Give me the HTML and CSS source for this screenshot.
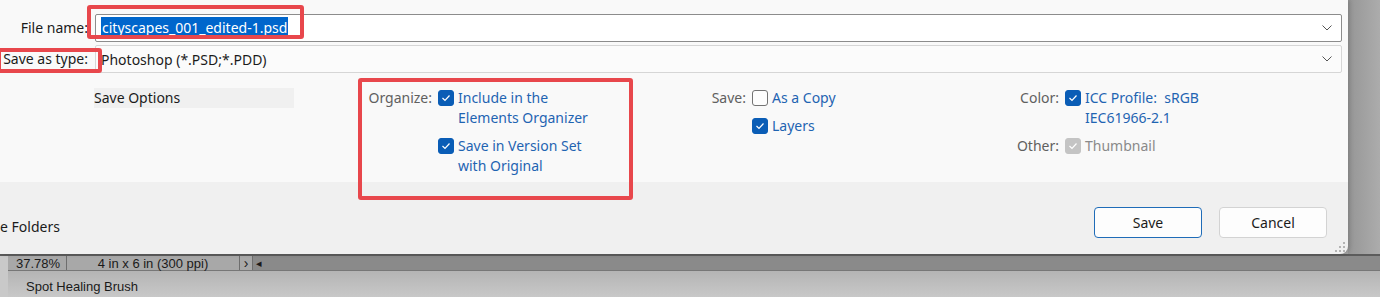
FILE: index.html
```html
<!DOCTYPE html>
<html lang="en">
<head>
  <meta charset="UTF-8">
  <meta name="viewport" content="width=device-width, initial-scale=1.0">
  <title>Save As</title>
  <link rel="stylesheet" href="styles.css">
</head>
<body>
  <div class="screen">
    <div class="workspace">
      <div class="dialog">
        <div class="form">
          <div class="fields">
            <label class="field-label">File name:</label>
            <div class="combo combo-focus">
              <span class="selected">cityscapes_001_edited-1.psd</span>
              <svg class="chevron" width="10" height="6" viewBox="0 0 10 6"><polyline points="0.5,0.5 5,5 9.5,0.5" fill="none" stroke="#555" stroke-width="1"/></svg>
            </div>
            <label class="field-label">Save as type:</label>
            <div class="combo">
              <span class="combo-text">Photoshop (*.PSD;*.PDD)</span>
              <svg class="chevron" width="10" height="6" viewBox="0 0 10 6"><polyline points="0.5,0.5 5,5 9.5,0.5" fill="none" stroke="#555" stroke-width="1"/></svg>
            </div>
          </div>

          <div class="options">
            <div class="options-title">Save Options</div>

            <div class="group group-organize">
              <span class="group-label">Organize:</span>
              <div class="check-item">
                <span class="box checked"><svg width="10" height="8" viewBox="0 0 10 8"><polyline points="1.5,4 4,6.5 8.5,1.5" fill="none" stroke="#fff" stroke-width="1.2"/></svg></span>
                <span>Include in the<br>Elements Organizer</span>
              </div>
              <span class="group-label"></span>
              <div class="check-item">
                <span class="box checked"><svg width="10" height="8" viewBox="0 0 10 8"><polyline points="1.5,4 4,6.5 8.5,1.5" fill="none" stroke="#fff" stroke-width="1.2"/></svg></span>
                <span>Save in Version Set<br>with Original</span>
              </div>
            </div>

            <div class="group group-save">
              <span class="group-label">Save:</span>
              <div class="check-item">
                <span class="box"></span>
                <span>As a Copy</span>
              </div>
              <span class="group-label"></span>
              <div class="check-item">
                <span class="box checked"><svg width="10" height="8" viewBox="0 0 10 8"><polyline points="1.5,4 4,6.5 8.5,1.5" fill="none" stroke="#fff" stroke-width="1.2"/></svg></span>
                <span>Layers</span>
              </div>
            </div>

            <div class="group group-color">
              <span class="group-label">Color:</span>
              <div class="check-item">
                <span class="box checked"><svg width="10" height="8" viewBox="0 0 10 8"><polyline points="1.5,4 4,6.5 8.5,1.5" fill="none" stroke="#fff" stroke-width="1.2"/></svg></span>
                <span>ICC Profile:&nbsp; sRGB<br>IEC61966-2.1</span>
              </div>
              <span class="group-label">Other:</span>
              <div class="check-item disabled">
                <span class="box checked"><svg width="10" height="8" viewBox="0 0 10 8"><polyline points="1.5,4 4,6.5 8.5,1.5" fill="none" stroke="#fff" stroke-width="1.2"/></svg></span>
                <span>Thumbnail</span>
              </div>
            </div>
          </div>
        </div>

        <div class="footer">
          <span class="folders">e Folders</span>
          <div class="buttons">
            <button class="btn btn-default">Save</button>
            <button class="btn">Cancel</button>
          </div>
          <svg class="grip" width="12" height="12" viewBox="0 0 12 12" fill="#b4b4b4">
            <rect x="10" y="2" width="2" height="2"/>
            <rect x="6" y="6" width="2" height="2"/>
            <rect x="10" y="6" width="2" height="2"/>
            <rect x="2" y="10" width="2" height="2"/>
            <rect x="6" y="10" width="2" height="2"/>
            <rect x="10" y="10" width="2" height="2"/>
          </svg>
        </div>
      </div>
      <div class="backdrop"></div>
    </div>

    <div class="statusbar">
      <div class="status-edge"></div>
      <div class="status-main">
        <div class="status-cells">
          <span class="cell cell-zoom">37.78%</span>
          <span class="cell cell-size">4 in x 6 in (300 ppi)</span>
          <span class="cell cell-arrow">&#x203A;</span>
          <span class="cell cell-back">&#x25C2;</span>
        </div>
        <div class="tool-name">Spot Healing Brush</div>
      </div>
    </div>

    <!-- annotation boxes -->
    <div class="callout callout-name"></div>
    <div class="callout callout-type"></div>
    <div class="callout callout-organize"></div>
  </div>
</body>
</html>
```

FILE: styles.css
```css
body {
  margin: 0;
  padding: 0;
  font-family: "Noto Sans", "Open Sans", sans-serif;
  font-size: 14px;
  color: #1b1b1b;
  background-color: #a4a4a4;
}

.screen {
  position: relative;
  width: 1380px;
  height: 297px;
  overflow: hidden;
}

.workspace {
  display: flex;
  height: 254px;
}

.dialog {
  position: relative;
  width: 1348px;
  flex-shrink: 0;
  display: flex;
  flex-direction: column;
  border-bottom-right-radius: 8px;
  overflow: hidden;
  box-shadow: 2px 0 4px rgba(0, 0, 0, 0.15);
}

.backdrop {
  flex: 1;
  background: linear-gradient(to right, #969696, #acacac);
}

/* upper part */
.form {
  height: 182px;
  background-color: #f9f9f9;
}

.fields {
  display: grid;
  grid-template-columns: 95px 1fr;
  row-gap: 3px;
  padding: 14px 6px 0 0;
}

.field-label {
  text-align: right;
  padding-right: 7px;
  line-height: 28px;
  color: #1b1b1b;
}

.combo {
  display: flex;
  align-items: center;
  justify-content: space-between;
  height: 28px;
  box-sizing: border-box;
  border: 1px solid #d6d6d6;
  border-radius: 2px;
  background-color: #fbfbfb;
  padding: 0 9px 0 5px;
}

.combo-focus {
  border-color: #8c8c8c;
  background-color: #fff;
}

.selected {
  background-color: #0066cc;
  color: #fff;
  line-height: 22px;
  padding: 0 1px;
}

.chevron {
  display: block;
}

/* options */
.options {
  display: flex;
  margin-top: 15px;
  padding-left: 94px;
}

.options-title {
  width: 200px;
  height: 20px;
  line-height: 20px;
  background-color: #f0f0f0;
}

.group {
  display: grid;
  grid-template-columns: var(--label-width) auto;
  column-gap: 6px;
  row-gap: 8px;
  align-content: start;
}

.group-organize {
  --label-width: 138px;
  width: 406px;
}

.group-save {
  --label-width: 46px;
  width: 300px;
}

.group-color {
  --label-width: 59px;
}

.group-label {
  text-align: right;
  line-height: 20px;
  color: #606060;
}

.check-item {
  display: flex;
  gap: 4px;
  line-height: 20px;
  color: #1f64b2;
}

.box {
  flex-shrink: 0;
  display: flex;
  align-items: center;
  justify-content: center;
  width: 16px;
  height: 16px;
  box-sizing: border-box;
  margin-top: 2px;
  border: 1px solid #737373;
  border-radius: 3px;
  background-color: #fdfdfd;
}

.box.checked {
  border-color: #0a5db6;
  background-color: #0a5db6;
}

.check-item.disabled {
  color: #8a8a8a;
}

.check-item.disabled .box {
  border-color: #c4c4c4;
  background-color: #c4c4c4;
}

/* footer */
.footer {
  position: relative;
  flex: 1;
  display: flex;
  justify-content: space-between;
  align-items: flex-start;
  background-color: #f0f0f0;
}

.folders {
  margin-top: 35px;
  line-height: 20px;
}

.buttons {
  display: flex;
  gap: 17px;
  margin: 25px 21px 0 0;
}

.btn {
  width: 108px;
  height: 31px;
  font-family: inherit;
  font-size: 14px;
  color: #1b1b1b;
  background-color: #fdfdfd;
  border: 1px solid #d3d3d3;
  border-radius: 4px;
  padding: 0;
}

.btn-default {
  border-color: #1f6cb8;
}

.grip {
  position: absolute;
  right: 3px;
  bottom: 2px;
}

/* photoshop status bar */
.statusbar {
  display: flex;
  height: 43px;
  border-top: 2px solid #5c5c5c;
  box-sizing: border-box;
  font-family: "Liberation Sans", Arial, sans-serif;
  font-size: 12px;
  color: #1a1a1a;
}

.status-edge {
  width: 8px;
  background-color: #c9c9c9;
}

.status-main {
  flex: 1;
  display: flex;
  flex-direction: column;
  background: linear-gradient(to bottom, #a9a9a9, #c8c8c8);
}

.status-cells {
  display: flex;
  height: 14px;
  background-color: #8a8a8a;
  border-bottom: 1px solid #777;
}

.cell {
  line-height: 15px;
  height: 14px;
  background-color: #a8a8a8;
  border-right: 1px solid #6e6e6e;
}

.cell-zoom {
  width: 59px;
  padding-left: 8px;
  box-sizing: border-box;
  font-size: 13px;
}

.cell-size {
  width: 172px;
  text-align: center;
  font-size: 13px;
}

.cell-arrow {
  width: 12px;
  text-align: center;
  font-size: 14px;
  line-height: 14px;
}

.cell-back {
  width: 12px;
  text-align: center;
  background-color: #8a8a8a;
  border-right: none;
  font-size: 11px;
  line-height: 14px;
}

.tool-name {
  padding: 3px 0 0 18px;
  line-height: 26px;
  font-size: 13px;
}

/* red annotation boxes */
.callout {
  position: absolute;
  box-sizing: border-box;
  border: 4px solid #e8474c;
  border-radius: 3px;
}

.callout-name {
  left: 87px;
  top: 5px;
  width: 217px;
  height: 34px;
}

.callout-type {
  left: -3px;
  top: 48px;
  width: 105px;
  height: 25px;
}

.callout-organize {
  left: 358px;
  top: 78px;
  width: 275px;
  height: 122px;
}
```
